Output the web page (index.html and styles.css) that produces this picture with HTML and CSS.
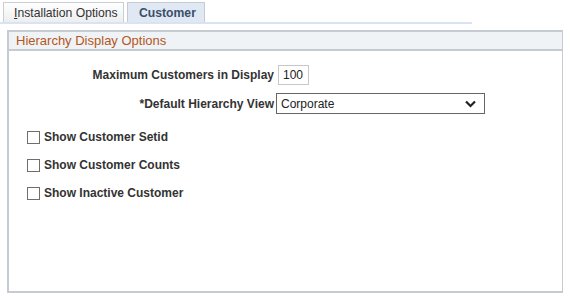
FILE: index.html
```html
<!DOCTYPE html>
<html>
<head>
<meta charset="utf-8">
<link rel="stylesheet" href="styles.css">
</head>
<body>
<div class="tabs">
  <div class="tab"><span class="ul">I</span>nstallation Options</div>
  <div class="tab active">Customer</div>
</div>
<div class="tabline"></div>
<div class="group">
  <div class="group-title">Hierarchy Display Options</div>
  <div class="form">
    <div class="row">
      <div class="label">Maximum Customers in Display</div>
      <div class="input">100</div>
    </div>
    <div class="row">
      <div class="label">*Default Hierarchy View</div>
      <div class="select"><span>Corporate</span>
        <svg class="chev" width="11" height="8" viewBox="0 0 11 8"><path d="M1 1.5 L5.5 6 L10 1.5" fill="none" stroke="#222" stroke-width="2.2"/></svg>
      </div>
    </div>
  </div>
  <div class="checks">
    <div class="check"><span class="box"></span>Show Customer Setid</div>
    <div class="check"><span class="box"></span>Show Customer Counts</div>
    <div class="check"><span class="box"></span>Show Inactive Customer</div>
  </div>
</div>
</body>
</html>
```
FILE: styles.css
```css
* { box-sizing: border-box; }
body {
  margin: 0;
  background: #fff;
  font-family: "Liberation Sans", Arial, sans-serif;
  font-size: 12px;
  color: #333;
  width: 567px;
  height: 297px;
  overflow: hidden;
}
.tabs {
  display: flex;
  gap: 3px;
  padding: 2px 0 0 3px;
  height: 22px;
}
.tab {
  height: 20px;
  width: 121px;
  padding: 0 0 0 10px;
  border: 1px solid #c9ced4;
  border-bottom: none;
  background: linear-gradient(#ffffff, #eceeef);
  display: flex;
  align-items: center;
  color: #333;
  font-size: 12.2px;
  white-space: nowrap;
}
.ul { text-decoration: underline; }
.tab.active {
  background: #e0e8f4;
  border-color: #c3cbd6;
  font-weight: bold;
  color: #3a4f68;
  padding: 0 0 0 11px;
  width: 78px;
}
.tabline {
  width: 472px;
  height: 2px;
  background: #d9e3f2;
}
.group {
  margin: 6px 0 0 7px;
  width: 556px;
  height: 263px;
  border: 1px solid #c6cbd1;
  border-top: none;
  border-left-width: 2px;
  border-bottom-width: 2px;
}
.group-title {
  height: 21px;
  background: #eff3f5;
  border-top: 2px solid #c6cbd1;
  border-bottom: 2px solid #c6cbd1;
  color: #b4561f;
  font-size: 13px;
  padding-left: 7px;
  display: flex;
  align-items: center;
}
.form {
  display: flex;
  flex-direction: column;
  gap: 8px;
  padding-top: 14px;
}
.row {
  display: flex;
  align-items: center;
}
.label {
  width: 265px;
  text-align: right;
  font-weight: bold;
}
.input {
  margin-left: 4px;
  width: 31px;
  height: 20px;
  border: 1px solid #c8c8c8;
  padding-left: 4px;
  display: flex;
  align-items: center;
  color: #222;
}
.select {
  margin-left: 2px;
  width: 209px;
  height: 21px;
  border: 1px solid #666;
  padding: 0 8px 0 4px;
  display: flex;
  align-items: center;
  justify-content: space-between;
  color: #222;
}
.checks {
  display: flex;
  flex-direction: column;
  gap: 14px;
  padding: 16px 0 0 18px;
}
.check {
  display: flex;
  align-items: center;
  font-weight: bold;
  height: 14px;
}
.box {
  width: 13px;
  height: 13px;
  border: 1px solid #6e6e6e;
  margin-right: 4px;
  background: #fff;
}
```
